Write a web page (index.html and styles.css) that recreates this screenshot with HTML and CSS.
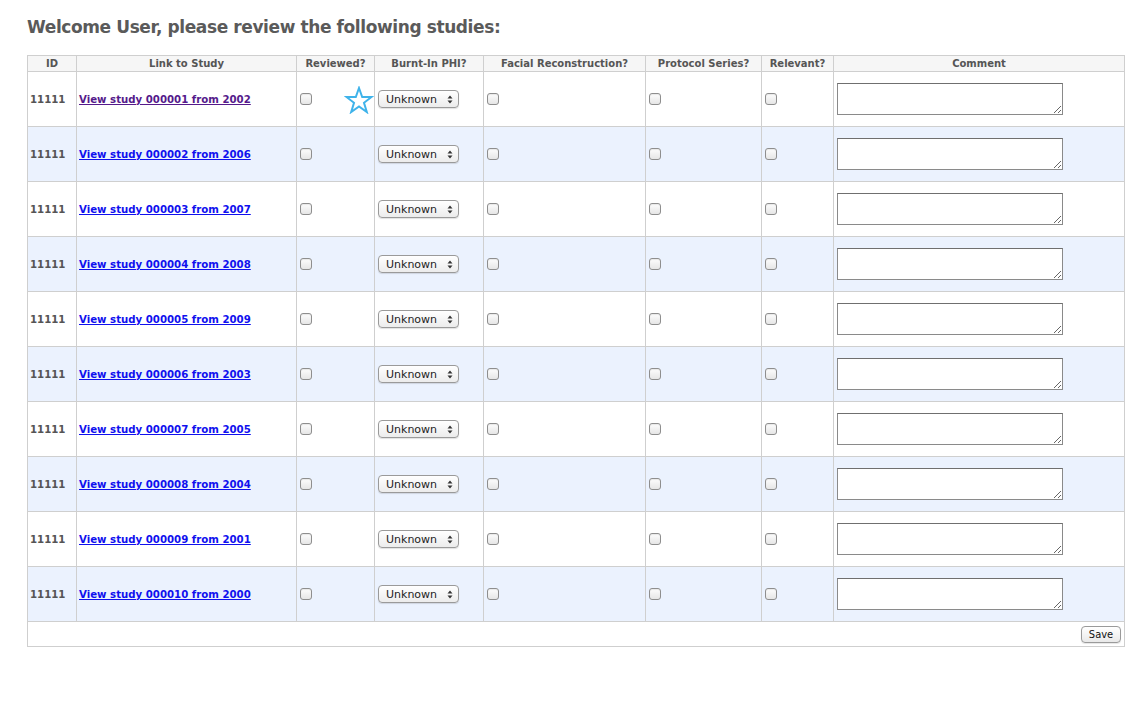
FILE: index.html
```html
<!DOCTYPE html>
<html>
<head>
<meta charset="utf-8">
<title>Review studies</title>
<link rel="stylesheet" href="styles.css">
</head>
<body>
<div class="page">
  <h1 class="title">Welcome User, please review the following studies:</h1>
  <form class="review-form">
    <table class="studies">
      <colgroup>
        <col class="c-id"><col class="c-link"><col class="c-rev"><col class="c-phi"><col class="c-face"><col class="c-proto"><col class="c-rel"><col class="c-comment">
      </colgroup>
      <thead>
        <tr>
          <th>ID</th><th>Link to Study</th><th>Reviewed?</th><th>Burnt-In PHI?</th><th>Facial Reconstruction?</th><th>Protocol Series?</th><th>Relevant?</th><th>Comment</th>
        </tr>
      </thead>
      <tbody>
        <tr>
          <td class="id">11111</td>
          <td><a class="visited" href="#">View study 000001 from 2002</a></td>
          <td class="rev-cell"><input type="checkbox" class="cb"><svg class="star" viewBox="0 0 30 28" width="30" height="28"><polygon points="15,2 18.2,11 27.5,11 20,16.8 22.8,26 15,20.4 7.2,26 10,16.8 2.5,11 11.8,11" fill="none" stroke="#3fb3ea" stroke-width="2" stroke-linejoin="miter"/></svg></td>
          <td><span class="sel"><select><option>Unknown</option></select><svg class="arrows" viewBox="0 0 6 9" width="6" height="9"><path d="M3 0.5 L5.5 3.5 L0.5 3.5Z M3 8.5 L5.5 5.5 L0.5 5.5Z" fill="#333"/></svg></span></td>
          <td><input type="checkbox" class="cb"></td>
          <td><input type="checkbox" class="cb"></td>
          <td><input type="checkbox" class="cb"></td>
          <td><textarea class="comment"></textarea></td>
        </tr>
        <tr class="alt">
          <td class="id">11111</td>
          <td><a href="#">View study 000002 from 2006</a></td>
          <td><input type="checkbox" class="cb"></td>
          <td><span class="sel"><select><option>Unknown</option></select><svg class="arrows" viewBox="0 0 6 9" width="6" height="9"><path d="M3 0.5 L5.5 3.5 L0.5 3.5Z M3 8.5 L5.5 5.5 L0.5 5.5Z" fill="#333"/></svg></span></td>
          <td><input type="checkbox" class="cb"></td>
          <td><input type="checkbox" class="cb"></td>
          <td><input type="checkbox" class="cb"></td>
          <td><textarea class="comment"></textarea></td>
        </tr>
        <tr>
          <td class="id">11111</td>
          <td><a href="#">View study 000003 from 2007</a></td>
          <td><input type="checkbox" class="cb"></td>
          <td><span class="sel"><select><option>Unknown</option></select><svg class="arrows" viewBox="0 0 6 9" width="6" height="9"><path d="M3 0.5 L5.5 3.5 L0.5 3.5Z M3 8.5 L5.5 5.5 L0.5 5.5Z" fill="#333"/></svg></span></td>
          <td><input type="checkbox" class="cb"></td>
          <td><input type="checkbox" class="cb"></td>
          <td><input type="checkbox" class="cb"></td>
          <td><textarea class="comment"></textarea></td>
        </tr>
        <tr class="alt">
          <td class="id">11111</td>
          <td><a href="#">View study 000004 from 2008</a></td>
          <td><input type="checkbox" class="cb"></td>
          <td><span class="sel"><select><option>Unknown</option></select><svg class="arrows" viewBox="0 0 6 9" width="6" height="9"><path d="M3 0.5 L5.5 3.5 L0.5 3.5Z M3 8.5 L5.5 5.5 L0.5 5.5Z" fill="#333"/></svg></span></td>
          <td><input type="checkbox" class="cb"></td>
          <td><input type="checkbox" class="cb"></td>
          <td><input type="checkbox" class="cb"></td>
          <td><textarea class="comment"></textarea></td>
        </tr>
        <tr>
          <td class="id">11111</td>
          <td><a href="#">View study 000005 from 2009</a></td>
          <td><input type="checkbox" class="cb"></td>
          <td><span class="sel"><select><option>Unknown</option></select><svg class="arrows" viewBox="0 0 6 9" width="6" height="9"><path d="M3 0.5 L5.5 3.5 L0.5 3.5Z M3 8.5 L5.5 5.5 L0.5 5.5Z" fill="#333"/></svg></span></td>
          <td><input type="checkbox" class="cb"></td>
          <td><input type="checkbox" class="cb"></td>
          <td><input type="checkbox" class="cb"></td>
          <td><textarea class="comment"></textarea></td>
        </tr>
        <tr class="alt">
          <td class="id">11111</td>
          <td><a href="#">View study 000006 from 2003</a></td>
          <td><input type="checkbox" class="cb"></td>
          <td><span class="sel"><select><option>Unknown</option></select><svg class="arrows" viewBox="0 0 6 9" width="6" height="9"><path d="M3 0.5 L5.5 3.5 L0.5 3.5Z M3 8.5 L5.5 5.5 L0.5 5.5Z" fill="#333"/></svg></span></td>
          <td><input type="checkbox" class="cb"></td>
          <td><input type="checkbox" class="cb"></td>
          <td><input type="checkbox" class="cb"></td>
          <td><textarea class="comment"></textarea></td>
        </tr>
        <tr>
          <td class="id">11111</td>
          <td><a href="#">View study 000007 from 2005</a></td>
          <td><input type="checkbox" class="cb"></td>
          <td><span class="sel"><select><option>Unknown</option></select><svg class="arrows" viewBox="0 0 6 9" width="6" height="9"><path d="M3 0.5 L5.5 3.5 L0.5 3.5Z M3 8.5 L5.5 5.5 L0.5 5.5Z" fill="#333"/></svg></span></td>
          <td><input type="checkbox" class="cb"></td>
          <td><input type="checkbox" class="cb"></td>
          <td><input type="checkbox" class="cb"></td>
          <td><textarea class="comment"></textarea></td>
        </tr>
        <tr class="alt">
          <td class="id">11111</td>
          <td><a href="#">View study 000008 from 2004</a></td>
          <td><input type="checkbox" class="cb"></td>
          <td><span class="sel"><select><option>Unknown</option></select><svg class="arrows" viewBox="0 0 6 9" width="6" height="9"><path d="M3 0.5 L5.5 3.5 L0.5 3.5Z M3 8.5 L5.5 5.5 L0.5 5.5Z" fill="#333"/></svg></span></td>
          <td><input type="checkbox" class="cb"></td>
          <td><input type="checkbox" class="cb"></td>
          <td><input type="checkbox" class="cb"></td>
          <td><textarea class="comment"></textarea></td>
        </tr>
        <tr>
          <td class="id">11111</td>
          <td><a href="#">View study 000009 from 2001</a></td>
          <td><input type="checkbox" class="cb"></td>
          <td><span class="sel"><select><option>Unknown</option></select><svg class="arrows" viewBox="0 0 6 9" width="6" height="9"><path d="M3 0.5 L5.5 3.5 L0.5 3.5Z M3 8.5 L5.5 5.5 L0.5 5.5Z" fill="#333"/></svg></span></td>
          <td><input type="checkbox" class="cb"></td>
          <td><input type="checkbox" class="cb"></td>
          <td><input type="checkbox" class="cb"></td>
          <td><textarea class="comment"></textarea></td>
        </tr>
        <tr class="alt">
          <td class="id">11111</td>
          <td><a href="#">View study 000010 from 2000</a></td>
          <td><input type="checkbox" class="cb"></td>
          <td><span class="sel"><select><option>Unknown</option></select><svg class="arrows" viewBox="0 0 6 9" width="6" height="9"><path d="M3 0.5 L5.5 3.5 L0.5 3.5Z M3 8.5 L5.5 5.5 L0.5 5.5Z" fill="#333"/></svg></span></td>
          <td><input type="checkbox" class="cb"></td>
          <td><input type="checkbox" class="cb"></td>
          <td><input type="checkbox" class="cb"></td>
          <td><textarea class="comment"></textarea></td>
        </tr>
      </tbody>
      <tfoot>
        <tr>
          <td colspan="8" class="foot"><button type="button" class="save">Save</button></td>
        </tr>
      </tfoot>
    </table>
  </form>
</div>
</body>
</html>
```

FILE: styles.css
```css
html, body {
  background: #fff;
}
body {
  margin: 8px;
  font-family: "DejaVu Sans", Verdana, sans-serif;
  color: #555;
}
.page {
  padding-left: 19px;
}
.title {
  margin: 8px 0 0 0;
  font-size: 17px;
  line-height: 22px;
  font-weight: bold;
  color: #5a5a5a;
  letter-spacing: -0.4px;
}
.review-form {
  margin-top: 17px;
}
.studies {
  width: 100%;
  border-collapse: collapse;
  table-layout: fixed;
  font-size: 10.2px;
  font-weight: bold;
}
.c-id { width: 49px; }
.c-link { width: 220px; }
.c-rev { width: 78px; }
.c-phi { width: 109px; }
.c-face { width: 162px; }
.c-proto { width: 116px; }
.c-rel { width: 72px; }
.c-comment { width: auto; }

.studies th, .studies td {
  border: 1px solid #cfcfcf;
}
.studies th {
  background: #f6f6f6;
  height: 15px;
  padding: 0;
  line-height: 14px;
  font-size: 10px;
  text-align: center;
  color: #555;
  font-weight: bold;
}
.studies tbody td {
  height: 55px;
  padding: 0 2px;
  vertical-align: middle;
  box-sizing: border-box;
}
.studies tbody tr.alt td {
  background: #ebf2fe;
}
.id {
  color: #555;
}
.studies a {
  color: #1010ee;
  text-decoration: underline;
}
.studies a.visited {
  color: #551a8b;
}
.cb {
  appearance: none;
  -webkit-appearance: none;
  width: 12px;
  height: 12px;
  margin: 0 0 1px 1px;
  vertical-align: middle;
  border: 1px solid #8e8e8e;
  border-radius: 3px;
  background: linear-gradient(#fdfdfd, #e6e6e6);
  box-sizing: border-box;
  box-shadow: inset 0 1px 1px rgba(0,0,0,0.08);
}
.rev-cell {
  position: relative;
}
.star {
  position: absolute;
  left: 47px;
  top: 14px;
}
.sel {
  position: relative;
  display: inline-block;
  margin-left: 1px;
  vertical-align: middle;
}
.sel select {
  appearance: none;
  -webkit-appearance: none;
  width: 81px;
  height: 18px;
  border: 1px solid #9a9a9a;
  border-radius: 4px;
  background: linear-gradient(#ffffff, #ececec);
  font-family: "DejaVu Sans", Verdana, sans-serif;
  font-size: 11px;
  color: #222;
  padding: 0 0 0 7px;
  box-shadow: 0 1px 1px rgba(0,0,0,0.12);
  display: block;
}
.arrows {
  position: absolute;
  right: 6px;
  top: 5px;
  pointer-events: none;
}
.comment {
  display: block;
  width: 226px;
  height: 32px;
  margin: 0 0 0 1px;
  padding: 2px;
  box-sizing: border-box;
  border: 1px solid #8a8a8a;
  border-top-color: #6f6f6f;
  background: #fff;
  resize: both;
  font-family: "DejaVu Sans", Verdana, sans-serif;
  font-size: 11px;
}
.foot {
  height: 25px;
  padding: 0 3px 0 0;
  text-align: right;
  vertical-align: middle;
  box-sizing: border-box;
  background: #fff;
}
.save {
  font-family: "DejaVu Sans Condensed", "DejaVu Sans", sans-serif;
  font-size: 11px;
  font-weight: normal;
  color: #111;
  height: 17px;
  width: 40px;
  padding: 0;
  border: 1px solid #9a9a9a;
  border-radius: 4px;
  background: linear-gradient(#ffffff, #e9e9e9);
  box-shadow: 0 1px 1px rgba(0,0,0,0.1);
  vertical-align: middle;
}
```
